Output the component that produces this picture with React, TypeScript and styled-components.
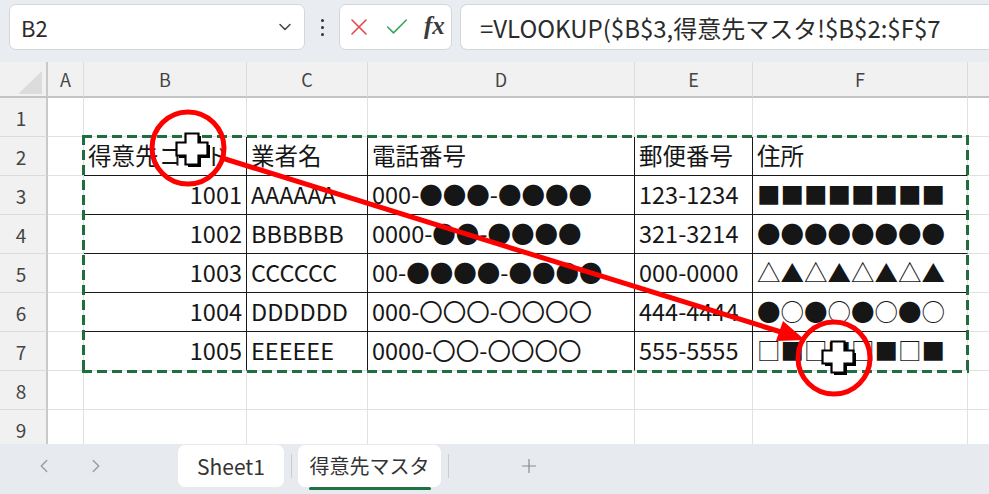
import React from 'react';
import styled, { createGlobalStyle } from 'styled-components';
import { ChevronDown, ChevronLeft, ChevronRight, Plus, X, Check } from 'lucide-react';

const GlobalStyle = createGlobalStyle`
	html, body {
		margin: 0;
		padding: 0;
		background: #ffffff;
	}
	body {
		font-family: "Noto Sans CJK JP", "Noto Sans", sans-serif;
	}
`;

// G is only a sliver at the right edge, its letter is off screen
const COLUMNS = ['A', 'B', 'C', 'D', 'E', 'F', ''];

type Align = 'left' | 'right';

interface SheetRow {
	code: string;
	name: string;
	tel: string;
	zip: string;
	addr: string;
}

const TABLE: SheetRow[] = [
	{ code: '得意先コード', name: '業者名', tel: '電話番号', zip: '郵便番号', addr: '住所' },
	{ code: '1001', name: 'AAAAAA', tel: '000-●●●-●●●●', zip: '123-1234', addr: '■■■■■■■■' },
	{ code: '1002', name: 'BBBBBB', tel: '0000-●●-●●●●', zip: '321-3214', addr: '●●●●●●●●' },
	{ code: '1003', name: 'CCCCCC', tel: '00-●●●●-●●●●', zip: '000-0000', addr: '△▲△▲△▲△▲' },
	{ code: '1004', name: 'DDDDDD', tel: '000-〇〇〇-〇〇〇〇', zip: '444-4444', addr: '●○●○●○●○' },
	{ code: '1005', name: 'EEEEEE', tel: '0000-〇〇-〇〇〇〇', zip: '555-5555', addr: '□■□■□■□■' }
];

// sheet row numbers 1..9, table occupies rows 2..7
const ROW_COUNT = 9;
const FIRST_DATA_ROW = 2;

export default function App() {
	const rows = Array.from({ length: ROW_COUNT }, (_, i) => i + 1);

	return (
		<Window>
			<GlobalStyle />

			<Toolbar>
				<NameBox>
					<span>B2</span>
					<ChevronDown size={20} strokeWidth={1.8} color="#444" />
				</NameBox>
				<MoreDots>
					<i />
					<i />
					<i />
				</MoreDots>
				<FxBox>
					<X size={28} strokeWidth={1.4} color="#e5484d" />
					<Check size={28} strokeWidth={1.4} color="#3aa757" />
					<FxLabel>fx</FxLabel>
				</FxBox>
				<FormulaBox>=VLOOKUP($B$3,得意先マスタ!$B$2:$F$7</FormulaBox>
			</Toolbar>

			<Sheet>
				<Grid>
					<Corner>
						<CornerTriangle />
					</Corner>
					{COLUMNS.map((letter, i) => (
						<ColumnHeader key={i}>{letter}</ColumnHeader>
					))}

					{rows.map(rowNumber => {
						const record = TABLE[rowNumber - FIRST_DATA_ROW];
						const inTable = !!record;
						const lastRow = rowNumber === FIRST_DATA_ROW + TABLE.length - 1;
						const values: { text: string; align: Align }[] = record
							? [
									{ text: record.code, align: rowNumber === FIRST_DATA_ROW ? 'left' : 'right' },
									{ text: record.name, align: 'left' },
									{ text: record.tel, align: 'left' },
									{ text: record.zip, align: 'left' },
									{ text: record.addr, align: 'left' }
							  ]
							: [];

						return (
							<React.Fragment key={rowNumber}>
								<RowHeader>{rowNumber}</RowHeader>
								<Cell />
								{[0, 1, 2, 3, 4].map(col => (
									<Cell
										key={col}
										$ruled={inTable}
										$align={values[col]?.align ?? 'left'}
										$edgeRight={col === 4}
										$edgeBottom={lastRow}
									>
										{values[col]?.text}
									</Cell>
								))}
								<Cell />
							</React.Fragment>
						);
					})}

					<CopyMarquee />
				</Grid>
			</Sheet>

			<TabBar>
				<TabNav>
					<ChevronLeft size={22} strokeWidth={1.5} color="#9b9b9b" />
					<ChevronRight size={22} strokeWidth={1.5} color="#9b9b9b" />
				</TabNav>
				<Tab $width={106}>Sheet1</Tab>
				<TabDivider />
				<Tab $width={143} $active>
					<TabLabel $active>得意先マスタ</TabLabel>
				</Tab>
				<TabDivider />
				<AddSheet>
					<Plus size={22} strokeWidth={1.3} color="#8a8a8a" />
				</AddSheet>
			</TabBar>

			<Annotation viewBox="0 0 989 494" width={989} height={494}>
				<circle cx={188} cy={148} r={36} fill="none" stroke="#ff0000" strokeWidth={5} />
				<circle cx={834} cy={358} r={36} fill="none" stroke="#ff0000" strokeWidth={5} />
				<line x1={222} y1={158} x2={781} y2={332} stroke="#ff0000" strokeWidth={5} />
				<polygon points="805,340 776,341 783,321" fill="#ff0000" />
				<CrossCursor x={192} y={149} />
				<CrossCursor x={838} y={357} />
			</Annotation>
		</Window>
	);
}

function CrossCursor({ x, y }: { x: number; y: number }) {
	const a = 6.5;
	const e = 15.5;
	const pts = [
		[-a, -e], [a, -e], [a, -a], [e, -a], [e, a], [a, a],
		[a, e], [-a, e], [-a, a], [-e, a], [-e, -a], [-a, -a]
	]
		.map(p => p.join(','))
		.join(' ');

	return (
		<g transform={`translate(${x} ${y})`}>
			<polygon points={pts} transform="translate(2.5 2.5)" fill="#000" />
			<polygon points={pts} fill="#fff" stroke="#000" strokeWidth={2.2} strokeLinejoin="miter" />
		</g>
	);
}

const Window = styled.div`
	position: relative;
	width: 989px;
	height: 494px;
	display: flex;
	flex-direction: column;
	overflow: hidden;
	background: #fff;
`;

const Toolbar = styled.div`
	height: 62px;
	flex: none;
	display: flex;
	align-items: flex-start;
	padding: 4px 0 0 9px;
	box-sizing: border-box;
	background: #e9edf1;
`;

const Box = styled.div`
	height: 46px;
	box-sizing: border-box;
	background: #fff;
	border: 1px solid #d3d7dc;
	border-radius: 7px;
	display: flex;
	align-items: center;
`;

const NameBox = styled(Box)`
	width: 296px;
	padding: 0 9px 0 11px;
	justify-content: space-between;
	font-size: 22px;
	color: #2b2b2b;
`;

const MoreDots = styled.div`
	width: 34px;
	height: 46px;
	display: flex;
	flex-direction: column;
	align-items: center;
	justify-content: center;
	gap: 4px;

	i {
		width: 3px;
		height: 3px;
		border-radius: 50%;
		background: #333;
	}
`;

const FxBox = styled(Box)`
	width: 113px;
	padding-left: 5px;
	gap: 10px;
`;

const FxLabel = styled.span`
	font-family: "Liberation Serif", "DejaVu Serif", serif;
	font-style: italic;
	font-weight: 700;
	font-size: 25px;
	color: #3a3a3a;
	margin-left: 3px;
	margin-top: -3px;
`;

const FormulaBox = styled(Box)`
	flex: 1;
	min-width: 0;
	margin-left: 8px;
	margin-right: -12px;
	padding-left: 19px;
	font-size: 24px;
	color: #2b2b2b;
	white-space: nowrap;
	overflow: hidden;
	border-right: none;
	border-radius: 7px 0 0 7px;
`;

const Sheet = styled.div`
	flex: 1;
	overflow: hidden;
	background: #fff;
`;

const Grid = styled.div`
	position: relative;
	display: grid;
	grid-template-columns: 48px 36px 163px 121px 267px 118px 215px 200px;
	grid-template-rows: 36px repeat(9, 39px);
`;

const Corner = styled.div`
	position: relative;
	background: #f1f1f1;
	border-right: 2px solid #c9c9c9;
	border-bottom: 2px solid #c4c4c4;
	box-sizing: border-box;
`;

const CornerTriangle = styled.div`
	position: absolute;
	left: 18px;
	top: 9px;
	width: 24px;
	height: 23px;
	background: #dcdcdc;
	clip-path: polygon(100% 0, 100% 100%, 0 100%);
`;

const ColumnHeader = styled.div`
	background: #f1f1f1;
	border-right: 1px solid #dcdcdc;
	border-bottom: 2px solid #c4c4c4;
	box-sizing: border-box;
	display: flex;
	align-items: center;
	justify-content: center;
	font-size: 18px;
	color: #444;
`;

const RowHeader = styled.div`
	background: #f1f1f1;
	border-right: 2px solid #c9c9c9;
	border-bottom: 1px solid #dcdcdc;
	box-sizing: border-box;
	display: flex;
	align-items: center;
	justify-content: center;
	padding-right: 4px;
	font-size: 19px;
	color: #444;
`;

const Cell = styled.div<{ $ruled?: boolean; $align?: Align; $edgeRight?: boolean; $edgeBottom?: boolean }>`
	box-sizing: border-box;
	border-right: 1px solid ${p => (p.$ruled && !p.$edgeRight ? '#1a1a1a' : '#e1e1e1')};
	border-bottom: 1px solid ${p => (p.$ruled && !p.$edgeBottom ? '#1a1a1a' : '#e1e1e1')};
	display: flex;
	align-items: center;
	justify-content: ${p => (p.$align === 'right' ? 'flex-end' : 'flex-start')};
	padding: 0 4px 0 4px;
	font-size: 23.5px;
	line-height: 1;
	color: #161616;
	white-space: nowrap;
`;

const ANT = '#1f6e3e';

const CopyMarquee = styled.div`
	position: absolute;
	grid-column: 3 / 8;
	grid-row: 3 / 9;
	top: -2px;
	left: -2px;
	right: -1px;
	bottom: -2px;
	pointer-events: none;
	background:
		repeating-linear-gradient(90deg, ${ANT} 0 10px, transparent 10px 15px) top / 100% 3px no-repeat,
		repeating-linear-gradient(90deg, ${ANT} 0 10px, transparent 10px 15px) bottom / 100% 3px no-repeat,
		repeating-linear-gradient(180deg, ${ANT} 0 10px, transparent 10px 15px) left / 3px 100% no-repeat,
		repeating-linear-gradient(180deg, ${ANT} 0 10px, transparent 10px 15px) right / 3px 100% no-repeat;
`;

const TabBar = styled.div`
	height: 50px;
	flex: none;
	display: flex;
	align-items: center;
	padding: 1px 0 7px 0;
	box-sizing: border-box;
	background: #e7eaee;
`;

const TabNav = styled.div`
	display: flex;
	align-items: center;
	gap: 30px;
	padding-left: 33px;
	margin-right: 71px;
`;

const Tab = styled.div<{ $width: number; $active?: boolean }>`
	width: ${p => p.$width}px;
	height: 42px;
	box-sizing: border-box;
	background: #fff;
	border-radius: 7px;
	display: flex;
	align-items: center;
	justify-content: center;
	font-size: ${p => (p.$active ? 20 : 21)}px;
	color: #333;
`;

const TabLabel = styled.span<{ $active?: boolean }>`
	position: relative;
	padding-bottom: 2px;

	&::after {
		content: '';
		display: ${p => (p.$active ? 'block' : 'none')};
		position: absolute;
		left: -1px;
		right: -1px;
		bottom: -8px;
		height: 3px;
		border-radius: 2px;
		background: #1e7145;
	}
`;

const TabDivider = styled.div`
	width: 1px;
	height: 24px;
	margin: 0 6px 0 7px;
	background: #c9ccd0;
`;

const AddSheet = styled.div`
	display: flex;
	margin-left: 63px;
`;

const Annotation = styled.svg`
	position: absolute;
	left: 0;
	top: 0;
	pointer-events: none;
`;
